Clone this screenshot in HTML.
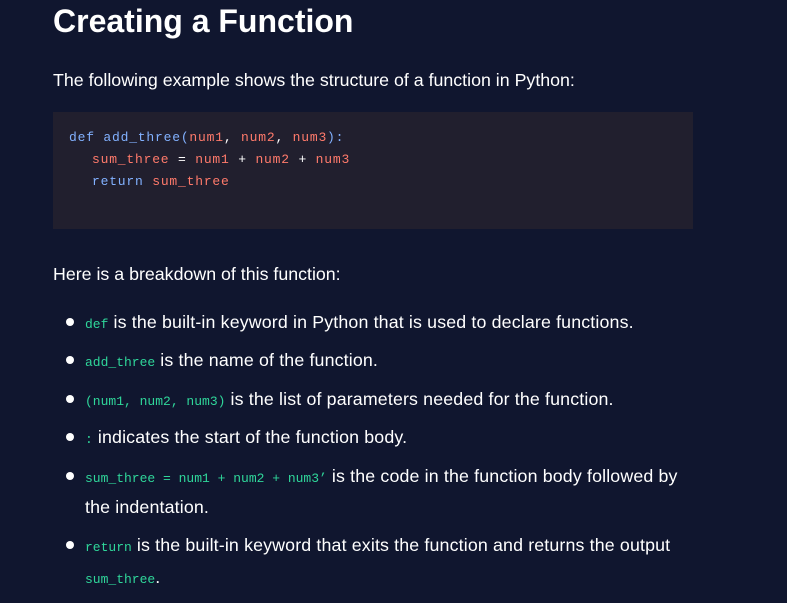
<!DOCTYPE html>
<html><head><style>
body{margin:0;background:#10162f;width:787px;height:603px;overflow:hidden;font-family:"Liberation Sans",sans-serif;color:#fff;position:relative}
.a{position:absolute;white-space:nowrap}
h1{position:absolute;left:53px;top:1px;margin:0;font-size:32px;font-weight:bold;line-height:40px}
.p{font-size:17.8px}
.l{letter-spacing:0.15px}
.code{position:absolute;left:53px;top:112px;width:640px;height:117px;background:#211f2e}
.m{font-family:"Liberation Mono",monospace;font-size:13px;letter-spacing:0}
.cb{letter-spacing:0.8px}
.b{color:#82b1ff}.r{color:#ff7a6b}.w{color:#fff}.g{color:#2fd69a}
.dot{position:absolute;left:66px;width:8px;height:8px;border-radius:50%;background:#fff}
</style></head><body>
<h1>Creating a Function</h1>
<div class="a p" style="left:53px;top:70px">The following example shows the structure of a function in Python:</div>
<div class="code"></div>
<div class="a m cb" style="left:69px;top:130px"><span class="b">def add_three(</span><span class="r">num1</span><span class="w">, </span><span class="r">num2</span><span class="w">, </span><span class="r">num3</span><span class="b">):</span></div>
<div class="a m cb r" style="left:92px;top:152px">sum_three <span class="w">=</span> num1 <span class="w">+</span> num2 <span class="w">+</span> num3</div>
<div class="a m cb" style="left:92px;top:174px"><span class="b">return</span> <span class="r">sum_three</span></div>
<div class="a p" style="left:53px;top:264px">Here is a breakdown of this function:</div>

<div class="dot" style="top:318px"></div>
<div class="a p l" style="left:85px;top:312px"><span class="m g">def</span> is the built-in keyword in Python that is used to declare functions.</div>
<div class="dot" style="top:356px"></div>
<div class="a p l" style="left:85px;top:350px"><span class="m g">add_three</span> is the name of the function.</div>
<div class="dot" style="top:395px"></div>
<div class="a p l" style="left:85px;top:389px"><span class="m g">(num1, num2, num3)</span> is the list of parameters needed for the function.</div>
<div class="dot" style="top:433px"></div>
<div class="a p l" style="left:85px;top:427px"><span class="m g">:</span> indicates the start of the function body.</div>
<div class="dot" style="top:472px"></div>
<div class="a p l" style="left:85px;top:466px"><span class="m g">sum_three = num1 + num2 + num3’</span> is the code in the function body followed by</div>
<div class="a p l" style="left:85px;top:497px">the indentation.</div>
<div class="dot" style="top:541px"></div>
<div class="a p l" style="left:85px;top:535px"><span class="m g">return</span> is the built-in keyword that exits the function and returns the output</div>
<div class="a p l" style="left:85px;top:567px"><span class="m g">sum_three</span>.</div>
</body></html>
